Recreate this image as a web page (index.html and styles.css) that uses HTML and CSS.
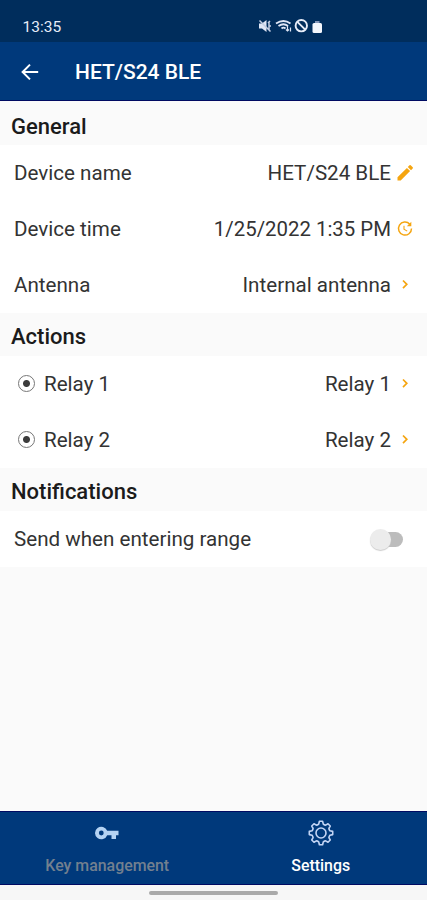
FILE: index.html
```html
<!DOCTYPE html>
<html lang="en">
<head>
<meta charset="utf-8">
<title>HET/S24 BLE</title>
<link rel="stylesheet" href="styles.css">
</head>
<body>
<div class="screen">
  <div class="status">
    <span class="clock">13:35</span>
    <svg class="status-icons" width="66" height="16" viewBox="0 0 66 16">
      <path d="M1 5.500h3L8.500 2v12L4 10.500H1z" fill="#dfe6f5"/>
      <path d="M1.500 2.500l11 11M10 5l2-2M10.500 8h2.500M11 3.500v9" stroke="#c5cfe4" stroke-width="1.500" fill="none"/>
      <path d="M18 5.500q7.500-5 14.500 0M20.500 8q5-3.500 9.500 0M23.500 10.500q2-1.800 4 0" stroke="#dfe6f5" stroke-width="1.800" fill="none"/>
      <path d="M29.500 8v5M28 11.500l1.500 1.500 1.500-1.500M32.500 13.500v-4" stroke="#dfe6f5" stroke-width="1.200" fill="none"/>
      <circle cx="43.300" cy="7.700" r="5.700" stroke="#e6ecf8" stroke-width="1.900" fill="none"/>
      <path d="M39.400 3.800l7.800 7.800" stroke="#e6ecf8" stroke-width="1.900"/>
      <rect x="57" y="3" width="4.500" height="3" fill="#8496b8"/>
      <rect x="54.500" y="5" width="9.500" height="10" rx="1.500" fill="#f3f6fc"/>
    </svg>
  </div>
  <header class="appbar">
    <svg width="18" height="18" viewBox="0 0 18 18" fill="none" stroke="#fff" stroke-width="2"><path d="M17.200 9H2M9 1.600L1.600 9 9 16.400"/></svg>
    <h1>HET/S24 BLE</h1>
  </header>
  <main>
    <h2 class="first">General</h2>
    <div class="row"><span class="label">Device name</span><span class="value">HET/S24 BLE</span>
      <svg class="icon" viewBox="0 0 18 18" fill="#f5a510"><path d="M1.500 13.300L10.900 3.900l3.200 3.200L4.700 16.500H1.500zM11.800 3l1.700-1.700q.6-.6 1.200 0l2 2q.6.6 0 1.200L15 6.200z"/></svg>
    </div>
    <div class="row"><span class="label">Device time</span><span class="value date">1/25/2022 1:35 PM</span>
      <svg class="icon" viewBox="0 0 18 18" fill="none" stroke="#f5a510" stroke-width="1.500"><path d="M13.800 4.200A6.500 6.500 0 1 0 15.500 8.500"/><path d="M15.300 1.800v4.500h-4.500z" fill="#f5a510" stroke="none"/><path d="M8 5.800v3.400l3.200 1.900" stroke-width="1.100"/></svg>
    </div>
    <div class="row"><span class="label">Antenna</span><span class="value">Internal antenna</span>
      <svg class="icon" viewBox="0 0 18 18" fill="none" stroke="#f5a510" stroke-width="1.700"><path d="M7 4.500L10.800 8.300 7 12.100"/></svg>
    </div>
    <h2>Actions</h2>
    <div class="row"><i class="radio"></i><span class="label">Relay 1</span><span class="value">Relay 1</span>
      <svg class="icon" viewBox="0 0 18 18" fill="none" stroke="#f5a510" stroke-width="1.700"><path d="M7 4.500L10.800 8.300 7 12.100"/></svg>
    </div>
    <div class="row"><i class="radio"></i><span class="label">Relay 2</span><span class="value">Relay 2</span>
      <svg class="icon" viewBox="0 0 18 18" fill="none" stroke="#f5a510" stroke-width="1.700"><path d="M7 4.500L10.800 8.300 7 12.100"/></svg>
    </div>
    <h2>Notifications</h2>
    <div class="row"><span class="label">Send when entering range</span><span class="switch"><i></i></span></div>
  </main>
  <nav>
    <div class="tab">
      <svg width="26" height="28" viewBox="0 0 26 28"><path fill="#b5d3f3" fill-rule="evenodd" d="M13.200 11.800A6.300 6.300 0 1 0 13.200 16.200H17.500V20H22v-3.800H24.500v-4.400zM7.300 11.600a2.400 2.400 0 1 1 0 4.800a2.400 2.400 0 1 1 0-4.800z"/></svg>
      <span>Key management</span>
    </div>
    <div class="tab active">
      <svg width="28" height="28" viewBox="-14 -14 28 28" fill="none" stroke="#c3d5f5" stroke-width="1.600" stroke-linejoin="round"><path d="M-2.300-8.900L-1.600-11.700H1.600L2.300-8.900Q3.500-7.900 4.670-7.920L7-9.260L9.260-7L7.920-4.670Q8-3.500 8.900-2.300L11.700-1.600V1.600L8.900 2.300Q8 3.500 7.920 4.670L9.260 7L7 9.260L4.670 7.920Q3.500 7.900 2.300 8.900L1.600 11.700H-1.600L-2.300 8.900Q-3.500 7.900-4.670 7.920L-7 9.260L-9.260 7L-7.920 4.670Q-8 3.500-8.900 2.300L-11.700 1.600V-1.600L-8.900-2.300Q-8-3.500-7.920-4.670L-9.260-7L-7-9.260L-4.670-7.920Q-3.500-7.900-2.300-8.900z"/><circle r="5"/></svg>
      <span>Settings</span>
    </div>
  </nav>
  <div class="home"><i></i></div>
</div>
</body>
</html>
```

FILE: styles.css
```css
* { box-sizing: border-box; }
body { margin: 0; font-family: Roboto, sans-serif; }
.screen { width: 427px; height: 900px; display: flex; flex-direction: column; background: #fafafa; overflow: hidden; }
.status { height: 42px; flex: none; background: #002d5c; display: flex; padding: 18px 0 0 22.500px; color: #e6ecf8; }
.clock { width: 235px; font-size: 15.500px; line-height: 18px; }
.appbar { height: 59px; flex: none; background: #00397b; border-bottom: 1px solid #000b62; display: flex; align-items: center; padding: 2px 0 0 21px; gap: 36px; }
h1 { margin: 0; color: #fff; font-size: 21px; font-weight: 500; line-height: 24px; white-space: nowrap; }
main { flex: 1; }
h2 { margin: 0; height: 43px; padding: 0 11px; font-size: 22px; line-height: 48px; font-weight: 500; color: #1b1b1b; }
h2.first { height: 44px; line-height: 52px; }
.row { height: 56px; background: #fff; display: flex; align-items: center; padding: 0 13px 0 14px; color: #333; font-size: 20.600px; white-space: nowrap; }
.value { margin-left: auto; }
.date { font-size: 20.400px; }
.icon { width: 18px; height: 18px; flex: none; margin-left: 5px; }
.radio { width: 17px; height: 17px; border: 1.500px solid #777; border-radius: 50%; margin: 0 9px 1px 4px; background: radial-gradient(circle, #3c3c3c 3px, transparent 4px); }
.switch { display: flex; align-items: center; width: 33px; height: 15px; margin: 0 11px 0 auto; background: linear-gradient(90deg, transparent 12px, #bcbcbc 12px); border-radius: 8px; }
.switch i { width: 21px; height: 21px; flex: none; border-radius: 50%; background: #ececec; box-shadow: 0 1px 1px #ccc; }
nav { height: 74px; flex: none; display: flex; background: #00397b; border-top: 1px solid #000b62; border-bottom: 1px solid #000b62; }
.tab { flex: 1; display: flex; flex-direction: column; align-items: center; padding: 7px 0 0 1px; gap: 9px; color: #73808f; font-size: 15.900px; font-weight: 500; line-height: 19px; }
.active { color: #fff; }
.home { height: 15px; flex: none; background: #f7f7f7; display: flex; justify-content: center; align-items: center; }
.home i { width: 129px; height: 4px; border-radius: 2px; background: #aaa; }
```
